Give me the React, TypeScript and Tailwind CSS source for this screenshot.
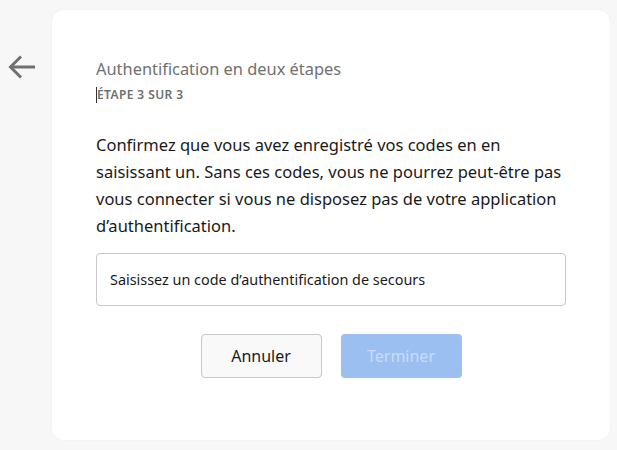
const App = () => {
  return (
    <div className="min-h-[450px] w-full bg-[#f7f7f7] flex items-start gap-[16px] pl-[8px] pt-[10px] font-['Segoe_UI','Noto_Sans',sans-serif]">
      {/* back button */}
      <button className="mt-[45px] w-[28px] h-[24px] text-[#707070]">
        <svg width="28" height="24" viewBox="0 0 28 24" fill="none" stroke="currentColor" strokeWidth="3" strokeLinecap="butt">
          <path d="M2 12h25" />
          <path d="M13 1.5L2.5 12L13 22.5" />
        </svg>
      </button>

      {/* card */}
      <div className="w-[558px] h-[430px] bg-white rounded-[12px] shadow-[0_0_2px_rgba(0,0,0,0.06)] pl-[44px] pr-[44px] pt-[48px]">
        <h1 className="text-[16.4px] leading-[22px] text-[#707070]">Authentification en deux étapes</h1>
        <p className="mt-[7px] text-[12px] leading-[16px] font-semibold tracking-[0.4px] text-[#6e6e6e] border-l border-[#333] w-fit">
          ÉTAPE 3 SUR 3
        </p>

        <p className="mt-[28px] text-[16.5px] leading-[27px] text-[#1a1a1a] w-[474px]">
          Confirmez que vous avez enregistré vos codes en en saisissant un. Sans ces codes, vous ne pourrez peut-être pas
          vous connecter si vous ne disposez pas de votre application d’authentification.
        </p>

        <input
          className="mt-[14px] block w-[470px] h-[53px] border border-[#c8c8c8] rounded-[4px] px-[13px] text-[14.4px] text-[#1a1a1a] placeholder:text-[#1a1a1a] outline-none"
          placeholder="Saisissez un code d’authentification de secours"
        />

        <div className="mt-[28px] w-[470px] flex justify-center gap-[19px]">
          <button className="w-[121px] h-[44px] rounded-[4px] border border-[#c8c8c8] bg-[#f9f9f9] text-[16px] text-[#1a1a1a]">
            Annuler
          </button>
          <button className="w-[121px] h-[44px] rounded-[4px] bg-[#9cbff2] text-[16px] text-[#c9dbf7]" disabled>
            Terminer
          </button>
        </div>
      </div>
    </div>
  );
};

export default App;
